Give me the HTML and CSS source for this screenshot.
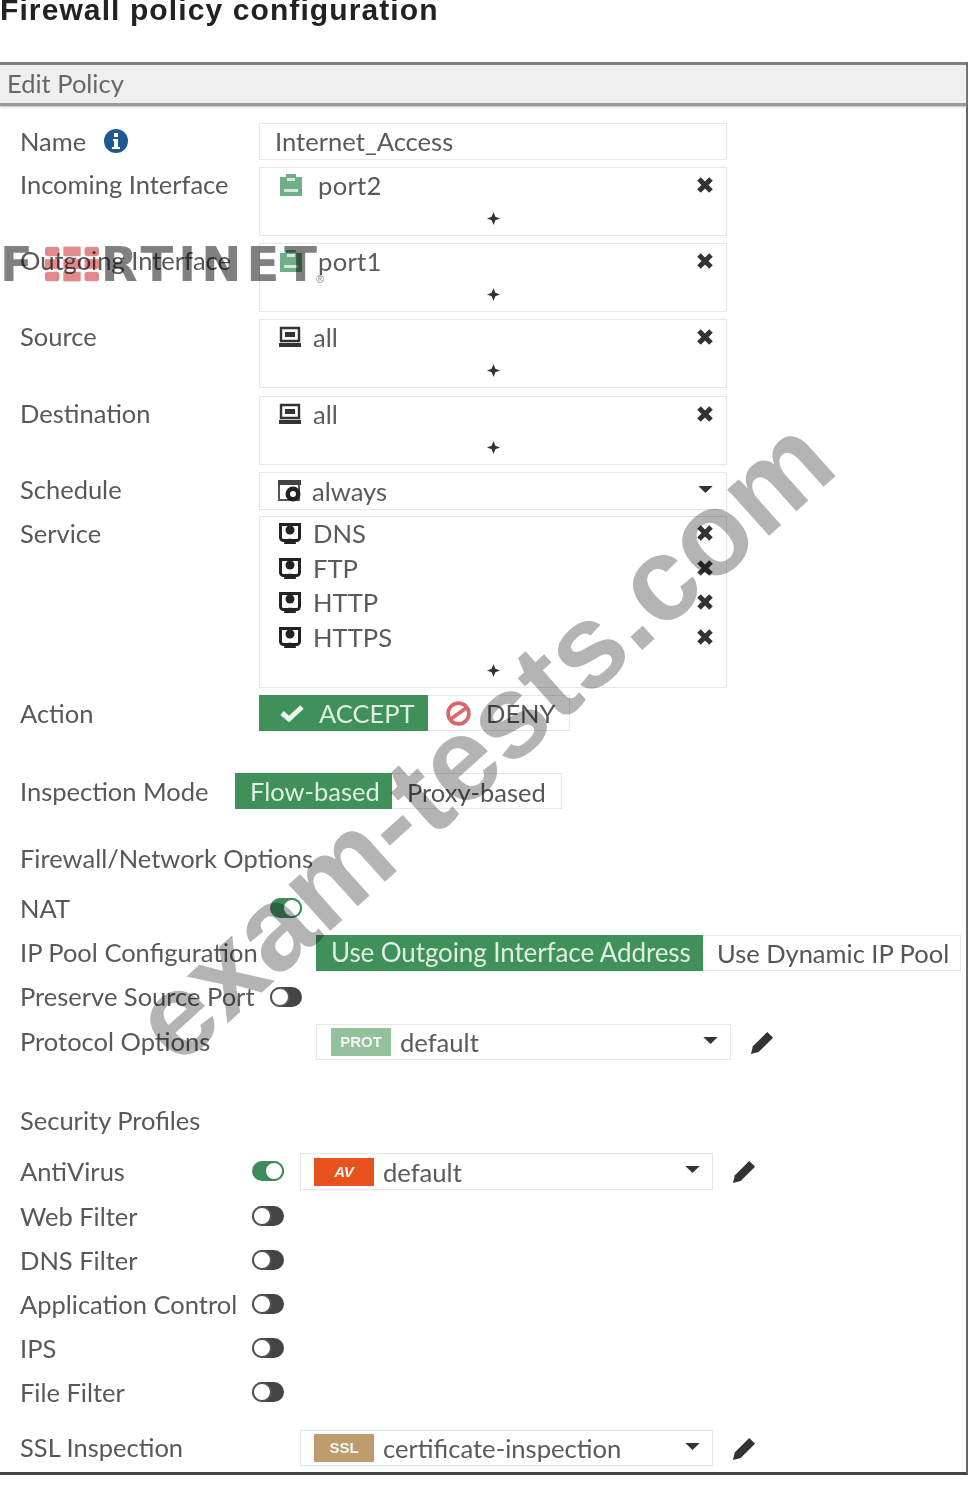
FILE: index.html
```html
<!DOCTYPE html>
<html lang="en">
<head>
<meta charset="utf-8">
<title>Firewall policy configuration</title>
<link rel="stylesheet" href="styles.css">
</head>
<body>
<svg class="defs" width="0" height="0" aria-hidden="true">
  <symbol id="i-iface" viewBox="0 0 24 24"><path fill="#6fae86" d="M1 4h6V1h10v3h6v19H1z"/><path fill="#d5e8da" d="M8 5h8v3H8zM5 16h14v3H5z"/></symbol>
  <symbol id="i-addr" viewBox="0 0 24 24"><path fill="none" stroke="#333" stroke-width="2.4" d="M3 3h18v13H3z"/><path fill="#333" d="M1 18h22v4H1zM7 7h10v5H7z"/></symbol>
  <symbol id="i-sched" viewBox="0 0 26 24"><path fill="none" stroke="#555" stroke-width="2" d="M2 5h20v16H2z"/><path fill="#444" d="M1 1h23v5H1z"/><circle cx="16" cy="15" r="7.500" fill="#222"/><circle cx="16" cy="15" r="3" fill="#fff"/></symbol>
  <symbol id="i-svc" viewBox="0 0 24 24"><path fill="none" stroke="#222" stroke-width="3" d="M2.500 3.500h19v13a3 3 0 0 1-3 3h-13a3 3 0 0 1-3-3z"/><circle cx="12" cy="9" r="4.500" fill="#222"/><path fill="#222" d="M6 23c0-7 12-7 12 0z"/></symbol>
  <symbol id="i-x" viewBox="0 0 18 18"><path fill="none" stroke="#333" stroke-width="5" d="M3 3l12 12M15 3L3 15"/></symbol>
  <symbol id="i-plus" viewBox="0 0 14 14"><path fill="#333" d="M7 0l2 5 5 2-5 2-2 5-2-5-5-2 5-2z"/></symbol>
  <symbol id="i-caret" viewBox="0 0 18 10"><path fill="#333" d="M1 1h16L9 9z"/></symbol>
  <symbol id="i-pencil" viewBox="0 0 26 26"><path fill="#333" d="M18 2l6 6L9 23l-8 2 2-8z"/></symbol>
</svg>

<div class="sheet">
  <h1 class="title">Firewall policy configuration</h1>

  <section class="panel">
    <header class="panel-head">Edit Policy</header>

    <form class="form">
      <div class="row row-name">
        <div class="label">Name <svg class="info" viewBox="0 0 24 24"><circle cx="12" cy="12" r="12" fill="#20598f"/><path fill="#fff" d="M10 4h4v4h-4zM9 10h5v8h2v2H8v-2h2v-6H9z"/></svg></div>
        <div class="box box-input">Internet_Access</div>
      </div>

      <div class="row row-tall">
        <div class="label">Incoming Interface</div>
        <div class="box box-list">
          <div class="entry"><svg class="ic ic-iface"><use href="#i-iface"/></svg><span class="entry-name port">port2</span><svg class="x"><use href="#i-x"/></svg></div>
          <svg class="plus"><use href="#i-plus"/></svg>
        </div>
      </div>

      <div class="row row-tall">
        <div class="label">Outgoing Interface</div>
        <div class="box box-list">
          <div class="entry"><svg class="ic ic-iface"><use href="#i-iface"/></svg><span class="entry-name port">port1</span><svg class="x"><use href="#i-x"/></svg></div>
          <svg class="plus"><use href="#i-plus"/></svg>
        </div>
      </div>

      <div class="row row-tall">
        <div class="label">Source</div>
        <div class="box box-list">
          <div class="entry"><svg class="ic"><use href="#i-addr"/></svg><span class="entry-name">all</span><svg class="x"><use href="#i-x"/></svg></div>
          <svg class="plus"><use href="#i-plus"/></svg>
        </div>
      </div>

      <div class="row row-tall row-gap8">
        <div class="label">Destination</div>
        <div class="box box-list">
          <div class="entry"><svg class="ic"><use href="#i-addr"/></svg><span class="entry-name">all</span><svg class="x"><use href="#i-x"/></svg></div>
          <svg class="plus"><use href="#i-plus"/></svg>
        </div>
      </div>

      <div class="row row-sched">
        <div class="label">Schedule</div>
        <div class="box box-select">
          <svg class="ic ic-sched"><use href="#i-sched"/></svg><span class="entry-name">always</span><svg class="caret"><use href="#i-caret"/></svg>
        </div>
      </div>

      <div class="row row-service">
        <div class="label">Service</div>
        <div class="box box-service">
          <div class="svc"><svg class="ic"><use href="#i-svc"/></svg><span class="entry-name">DNS</span><svg class="x"><use href="#i-x"/></svg></div>
          <div class="svc"><svg class="ic"><use href="#i-svc"/></svg><span class="entry-name">FTP</span><svg class="x"><use href="#i-x"/></svg></div>
          <div class="svc"><svg class="ic"><use href="#i-svc"/></svg><span class="entry-name">HTTP</span><svg class="x"><use href="#i-x"/></svg></div>
          <div class="svc"><svg class="ic"><use href="#i-svc"/></svg><span class="entry-name">HTTPS</span><svg class="x"><use href="#i-x"/></svg></div>
          <svg class="plus plus-svc"><use href="#i-plus"/></svg>
        </div>
      </div>

      <div class="row row-action">
        <div class="label">Action</div>
        <div class="seg seg-action">
          <span class="seg-on seg-accept"><svg class="check" viewBox="0 0 24 18"><path fill="none" stroke="#eef6f0" stroke-width="5" d="M2 9l7 6L22 3"/></svg>ACCEPT</span>
          <span class="seg-off seg-deny"><svg class="deny" viewBox="0 0 24 24"><circle cx="12" cy="12" r="10" fill="none" stroke="#d9666e" stroke-width="3.500"/><path stroke="#d9666e" stroke-width="3.500" d="M5 17L19 7"/></svg>DENY</span>
        </div>
      </div>

      <div class="row row-inspect">
        <div class="label label-narrow">Inspection Mode</div>
        <div class="seg seg-inspect">
          <span class="seg-on seg-flow">Flow-based</span>
          <span class="seg-off seg-proxy">Proxy-based</span>
        </div>
      </div>

      <div class="section section-fw">Firewall/Network Options</div>

      <div class="row row-offset row-nat">
        <div class="label">NAT</div>
        <span class="toggle toggle-on"></span>
      </div>

      <div class="row row-offset row-pool">
        <div class="label">IP Pool Configuration</div>
        <div class="seg seg-pool">
          <span class="seg-on seg-out">Use Outgoing Interface Address</span>
          <span class="seg-off seg-dyn">Use Dynamic IP Pool</span>
        </div>
      </div>

      <div class="row row-offset row-pool-gap">
        <div class="label">Preserve Source Port</div>
        <span class="toggle"></span>
      </div>

      <div class="row row-offset row-proto">
        <div class="label">Protocol Options</div>
        <div class="box box-profile box-proto">
          <span class="badge badge-prot">PROT</span><span class="entry-name">default</span><svg class="caret"><use href="#i-caret"/></svg>
        </div>
        <svg class="pencil"><use href="#i-pencil"/></svg>
      </div>

      <div class="section section-sec">Security Profiles</div>

      <div class="row row-sec row-av">
        <div class="label">AntiVirus</div>
        <span class="toggle toggle-on"></span>
        <div class="box box-profile">
          <span class="badge badge-av">AV</span><span class="entry-name">default</span><svg class="caret"><use href="#i-caret"/></svg>
        </div>
        <svg class="pencil"><use href="#i-pencil"/></svg>
      </div>

      <div class="row row-sec row-plain"><div class="label">Web Filter</div><span class="toggle"></span></div>
      <div class="row row-sec row-plain"><div class="label">DNS Filter</div><span class="toggle"></span></div>
      <div class="row row-sec row-plain"><div class="label">Application Control</div><span class="toggle"></span></div>
      <div class="row row-sec row-plain"><div class="label">IPS</div><span class="toggle"></span></div>
      <div class="row row-sec row-plain"><div class="label">File Filter</div><span class="toggle"></span></div>

      <div class="row row-sec row-ssl">
        <div class="label">SSL Inspection</div>
        <span class="toggle-slot"></span>
        <div class="box box-profile">
          <span class="badge badge-ssl">SSL</span><span class="entry-name">certificate-inspection</span><svg class="caret"><use href="#i-caret"/></svg>
        </div>
        <svg class="pencil"><use href="#i-pencil"/></svg>
      </div>
    </form>
  </section>
</div>

<div class="logo">
  <span>F</span>
  <svg class="logo-mark" viewBox="0 0 56 36"><g fill="#e08a8c"><rect x="0" y="0" width="15" height="10" rx="3"/><rect x="19" y="0" width="18" height="10"/><rect x="41" y="0" width="15" height="10" rx="3"/><rect x="0" y="13" width="15" height="10"/><rect x="19" y="13" width="18" height="10"/><rect x="41" y="13" width="15" height="10"/><rect x="0" y="26" width="15" height="10" rx="3"/><rect x="19" y="26" width="18" height="10"/><rect x="41" y="26" width="15" height="10" rx="3"/></g></svg>
  <span>RTINET</span>
  <small class="logo-r">®</small>
</div>
<div class="watermark">exam-tests.com</div>
</body>
</html>
```
FILE: styles.css
```css
html, body {
  margin: 0;
  padding: 0;
  background: #fff;
}
body {
  position: relative;
  width: 977px;
  height: 1485px;
  overflow: hidden;
  font-family: Lato, "Open Sans", sans-serif;
  color: #555;
}
.defs { position: absolute; }

.sheet { filter: blur(0.6px); }

.title {
  margin: 0;
  height: 62px;
  font: bold 30px/20px "Liberation Sans", Arial, sans-serif;
  color: #222;
  letter-spacing: 1.100px;
}

.panel {
  width: 968px;
  height: 1413px;
  box-sizing: border-box;
  border-top: 3px solid #7d7d7d;
  border-right: 2px solid #666;
  border-bottom: 3px solid #444;
}
.panel-head {
  height: 38px;
  padding-left: 7px;
  font-size: 25.500px;
  line-height: 36px;
  color: #666;
  background: #efefef;
  border-bottom: 3px solid #9a9a9a;
  box-shadow: 0 1px 2px #bbb;
}

.form { display: flow-root; }

.row {
  display: grid;
  grid-template-columns: 259px 468px;
  align-items: start;
  margin-top: 7px;
}
.row-name { margin-top: 17px; height: 37px; }
.row-tall { height: 69px; }
.row-gap8 { margin-top: 8px; }
.row-sched { height: 38px; }
.row-service { margin-top: 6px; height: 172px; }
.row-action { height: 36px; }
.row-inspect { margin-top: 42px; height: 36px; grid-template-columns: 235px auto; }
.row-offset { grid-template-columns: 316px 415px 40px; height: 36px; }
.row-nat { margin-top: 13px; grid-template-columns: 270px auto; }
.row-pool { margin-top: 9px; grid-template-columns: 316px auto; }
.row-pool-gap { margin-top: 8px; grid-template-columns: 270px auto; }
.row-proto { margin-top: 9px; }
.row-sec { grid-template-columns: 252px 48px 413px 40px; height: 36px; margin-top: 8px; }
.row-av { margin-top: 14px; height: 37px; }
.row-ssl { margin-top: 20px; }

.label {
  padding-left: 20px;
  font-size: 25.500px;
  line-height: 36px;
  white-space: nowrap;
  color: #585858;
}
.row-sched .label, .row-service .label { line-height: 34px; }
.row-tall .label { margin-top: -1px; }
.row-pool .label, .row-pool-gap .label, .row-proto .label, .row-ssl .label { line-height: 34px; }
.info { width: 24px; height: 24px; margin-left: 11px; vertical-align: -2px; }

.section {
  padding-left: 20px;
  font-size: 25.500px;
  line-height: 34px;
  height: 36px;
  color: #585858;
  white-space: nowrap;
}
.section-fw { margin-top: 32px; }
.section-sec { margin-top: 43px; }

.box {
  box-sizing: border-box;
  border: 1px solid #e6e6e6;
  font-size: 25.600px;
  color: #5a5a5a;
}
.box-input {
  height: 37px;
  padding-left: 15px;
  line-height: 34px;
}
.box-list {
  height: 69px;
  padding: 0 12px 0 18px;
  display: flex;
  flex-direction: column;
}
.entry {
  height: 34px;
  display: flex;
  align-items: center;
}
.ic { width: 24px; height: 24px; flex: none; margin-right: 11px; }
.ic-iface { margin-right: 15px; margin-left: 1px; }
.entry-name { flex: 1; line-height: 34px; }
.port { letter-spacing: 0.3px; }
.x { width: 18px; height: 18px; flex: none; }
.plus { width: 13px; height: 13px; flex: none; align-self: center; margin-top: 10px; margin-right: 6px; }
.box-select {
  height: 38px;
  padding: 0 12px 0 17px;
  display: flex;
  align-items: center;
}
.ic-sched { width: 26px; margin-right: 9px; }
.caret { width: 17px; height: 9px; flex: none; margin-bottom: 4px; }
.box-service {
  height: 172px;
  padding: 0 12px 0 18px;
  display: flex;
  flex-direction: column;
}
.svc {
  height: 34.500px;
  flex: none;
  display: flex;
  align-items: center;
}
.svc:first-child { margin-top: -1px; }
.plus-svc { margin-top: 10px; }

.seg {
  display: flex;
  height: 36px;
  font-size: 25.500px;
  line-height: 36px;
}
.seg-on {
  display: block;
  background: #3f9059;
  color: #dfeee3;
  white-space: nowrap;
}
.seg-off {
  display: block;
  box-sizing: border-box;
  border: 1px solid #e6e6e6;
  border-left: 0;
  white-space: nowrap;
  color: #555;
}
.seg-accept { width: 169px; box-sizing: border-box; padding-left: 21px; display: flex; align-items: center; }
.check { width: 24px; height: 18px; margin-right: 15px; }
.seg-deny { width: 142px; padding-left: 18px; display: flex; align-items: center; }
.deny { width: 25px; height: 25px; margin-right: 15px; }
.seg-flow { width: 157px; box-sizing: border-box; padding-left: 15px; }
.seg-proxy { width: 170px; padding-left: 15px; }
.seg-out { width: 387px; box-sizing: border-box; padding-left: 15px; font-size: 26px; line-height: 34px; letter-spacing: -0.1px; }
.seg-dyn { width: 258px; padding-left: 14px; line-height: 34px; }

.toggle {
  display: block;
  position: relative;
  box-sizing: border-box;
  width: 32px;
  height: 20px;
  margin-top: 8px;
  border-radius: 10px;
  background: #444;
}
.toggle::after {
  content: "";
  position: absolute;
  left: 0;
  top: 0;
  box-sizing: border-box;
  width: 20px;
  height: 20px;
  border: 2px solid #555;
  border-radius: 50%;
  background: #fff;
}
.toggle-on { background: #3f8a5c; }
.toggle-on::after { left: 12px; border-color: #3f8a5c; }

.box-profile {
  height: 36px;
  padding: 0 11px 0 13px;
  display: flex;
  align-items: center;
}
.box-proto { width: 415px; padding-left: 14px; }
.row-av .box-profile { height: 37px; }
.badge {
  flex: none;
  width: 60px;
  height: 28px;
  margin-right: 9px;
  font: bold 15px/28px "Liberation Sans", sans-serif;
  text-align: center;
  color: #f4f4f4;
}
.badge-prot { background: #93c19b; }
.badge-av { background: #e8521d; font-style: italic; }
.badge-ssl { background: #bf9c6d; }
.pencil { width: 25px; height: 25px; margin: 6px 0 0 19px; }

.logo {
  position: absolute;
  left: 0;
  top: 236px;
  display: flex;
  align-items: center;
  font: bold 48px/56px "DejaVu Sans", sans-serif;
  color: #808080;
  letter-spacing: 5px;
  mix-blend-mode: multiply;
  white-space: nowrap;
}
.logo-mark { width: 54px; height: 36px; margin: 0 2px 0 7px; }
.logo-r {
  position: absolute;
  left: 316px;
  top: 36px;
  font: 11px/14px "Liberation Sans", sans-serif;
  letter-spacing: 0;
}

.watermark {
  position: absolute;
  left: 36px;
  top: 669px;
  font: bold 118px/140px "Liberation Sans", sans-serif;
  color: #b4b4b4;
  white-space: nowrap;
  transform: rotate(-42deg);
  mix-blend-mode: multiply;
}
```
